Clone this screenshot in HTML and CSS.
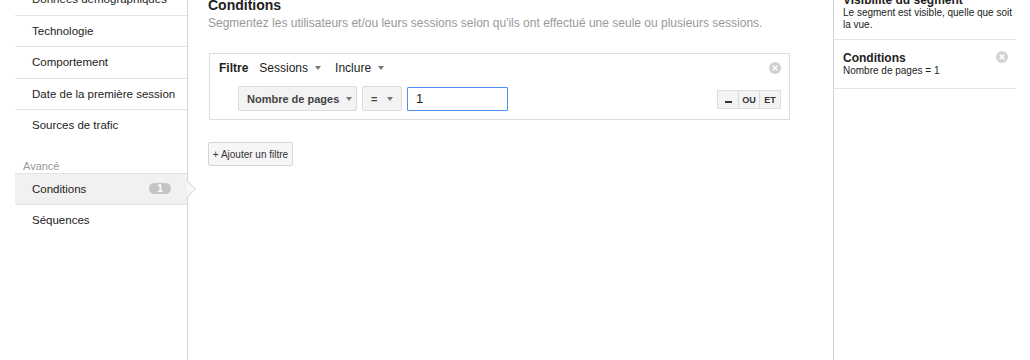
FILE: index.html
```html
<!DOCTYPE html>
<html lang="fr">

<head>
  <meta charset="UTF-8">
  <title>Segment - Conditions</title>
  <link rel="stylesheet" href="styles.css">
</head>

<body>
  <div class="page">

    <!-- left menu -->
    <div class="sidebar">
      <ul class="navList">
        <li class="navItem">Données démographiques</li>
        <li class="navItem">Technologie</li>
        <li class="navItem">Comportement</li>
        <li class="navItem">Date de la première session</li>
        <li class="navItem last">Sources de trafic</li>
      </ul>
      <div class="navHeader">Avancé</div>
      <ul class="navList">
        <li class="navItem active">Conditions <span class="badge">1</span></li>
        <li class="navItem last">Séquences</li>
      </ul>
    </div>

    <!-- editor -->
    <div class="main">
      <h1 class="title">Conditions</h1>
      <p class="subtitle">Segmentez les utilisateurs et/ou leurs sessions selon qu'ils ont effectué une seule ou plusieurs sessions.</p>

      <div class="filterBox">
        <div class="filterHead">
          <span class="filterLabel">Filtre</span>
          <span class="dropText">Sessions <i class="caret"></i></span>
          <span class="dropText">Inclure <i class="caret"></i></span>
          <svg class="closeIcon" width="12" height="12" viewBox="0 0 12 12">
            <circle cx="6" cy="6" r="6" fill="#cfcfcf" />
            <path d="M3.8 3.8 L8.2 8.2 M8.2 3.8 L3.8 8.2" stroke="#fff" stroke-width="1.6" />
          </svg>
        </div>
        <div class="filterRow">
          <span class="selectBtn wide">Nombre de pages <i class="caret"></i></span>
          <span class="selectBtn narrow">= <i class="caret"></i></span>
          <input class="valueInput" type="text" value="1">
          <div class="btnGroup">
            <span class="groupBtn"><i class="dash"></i></span>
            <span class="groupBtn">OU</span>
            <span class="groupBtn">ET</span>
          </div>
        </div>
      </div>

      <button class="addBtn">+ Ajouter un filtre</button>
    </div>

    <!-- summary -->
    <div class="aside">
      <div class="summary first">
        <div class="summaryTitle">Visibilité du segment</div>
        <div class="summaryText">Le segment est visible, quelle que soit<br>la vue.</div>
      </div>
      <div class="summary">
        <div class="summaryHead">
          <span class="summaryTitle">Conditions</span>
          <svg class="closeIcon" width="12" height="12" viewBox="0 0 12 12">
            <circle cx="6" cy="6" r="6" fill="#d4d4d4" />
            <path d="M3.8 3.8 L8.2 8.2 M8.2 3.8 L3.8 8.2" stroke="#fff" stroke-width="1.6" />
          </svg>
        </div>
        <div class="summaryText">Nombre de pages = 1</div>
      </div>
    </div>

  </div>
</body>

</html>
```

FILE: styles.css
```css
body {
  margin: 0;
  font-family: "Liberation Sans", Arial, sans-serif;
  color: #222;
  background: #fff;
}

.page {
  display: flex;
  height: 360px;
  overflow: hidden;
}

/* left menu */
.sidebar {
  width: 172px;
  padding-left: 15px;
  border-right: 1px solid #d4d4d4;
  flex-shrink: 0;
}

.navList {
  list-style: none;
  margin: 0;
  padding: 0;
}

.navList:first-child {
  margin-top: -16px;
}

.navItem {
  position: relative;
  height: 30.5px;
  line-height: 30.5px;
  padding-left: 17px;
  padding-right: 17px;
  font-size: 11.5px;
  color: #222;
  white-space: nowrap;
  border-bottom: 1px solid #e3e3e3;
}

.navItem.last {
  border-bottom: none;
}

.navHeader {
  padding: 18px 0 0 8px;
  height: 14px;
  line-height: 14px;
  font-size: 11px;
  color: #999;
  border-bottom: 1px solid #e3e3e3;
}

.navItem.active {
  background: #f1f1f1;
  display: flex;
  justify-content: space-between;
  align-items: center;
}

.navItem.active::before,
.navItem.active::after {
  content: "";
  position: absolute;
  top: 7px;
  width: 0;
  height: 0;
  border-top: 8px solid transparent;
  border-bottom: 8px solid transparent;
}

.navItem.active::before {
  right: -9px;
  border-left: 8px solid #cfcfcf;
}

.navItem.active::after {
  right: -8px;
  border-left: 8px solid #f7f7f7;
}

.badge {
  display: inline-block;
  width: 22px;
  height: 11px;
  line-height: 11px;
  border-radius: 6px;
  background: #c4c4c4;
  color: #fff;
  font-size: 10px;
  font-weight: bold;
  text-align: center;
  margin-right: -1px;
}

/* editor */
.main {
  flex: 1;
  padding-left: 20px;
  border-right: 1px solid #d4d4d4;
}

.title {
  margin: -4px 0 0 0;
  font-size: 14px;
  line-height: 18px;
  font-weight: bold;
  color: #222;
}

.subtitle {
  margin: 1px 0 0 0;
  font-size: 12px;
  line-height: 16px;
  color: #999;
}

.filterBox {
  margin: 22px 0 0 1px;
  width: 562px;
  padding: 6px 8px 8px 9px;
  border: 1px solid #dcdcdc;
}

.filterHead {
  display: flex;
  align-items: center;
  height: 16px;
  font-size: 12px;
}

.filterLabel {
  font-weight: bold;
  margin-right: 11px;
}

.dropText {
  color: #222;
  margin-right: 14px;
  display: flex;
  align-items: center;
}

.caret {
  display: inline-block;
  width: 0;
  height: 0;
  margin-left: 7px;
  border-left: 3px solid transparent;
  border-right: 3px solid transparent;
  border-top: 4px solid #777;
}

.closeIcon {
  margin-left: auto;
  display: block;
}

.filterRow {
  display: flex;
  align-items: center;
  gap: 5px;
  margin-top: 10px;
  padding-left: 19px;
}

.selectBtn {
  display: flex;
  align-items: center;
  justify-content: space-between;
  box-sizing: border-box;
  height: 25px;
  padding: 0 8px;
  background: #f3f3f3;
  border: 1px solid #dcdcdc;
  border-radius: 2px;
  font-size: 11px;
  font-weight: bold;
  color: #444;
  white-space: nowrap;
}

.selectBtn.wide {
  width: 119px;
}

.selectBtn.narrow {
  width: 40px;
}

.valueInput {
  box-sizing: border-box;
  width: 101px;
  height: 24px;
  padding: 0 8px;
  border: 1px solid #4d90fe;
  border-radius: 1px;
  font-family: "Liberation Sans", Arial, sans-serif;
  font-size: 13px;
  color: #222;
  outline: none;
}

.btnGroup {
  display: flex;
  margin-left: auto;
  margin-top: 2px;
}

.groupBtn {
  box-sizing: border-box;
  display: flex;
  align-items: center;
  justify-content: center;
  width: 22px;
  height: 19px;
  background: #f3f3f3;
  border: 1px solid #dcdcdc;
  margin-left: -1px;
  font-size: 9px;
  font-weight: bold;
  color: #333;
}

.dash {
  display: block;
  width: 7px;
  height: 2px;
  margin-top: 4px;
  background: #333;
}

.addBtn {
  margin-top: 22px;
  width: 85px;
  height: 24px;
  padding: 0;
  background: #f6f6f6;
  border: 1px solid #d6d6d6;
  border-radius: 2px;
  font-family: "Liberation Sans", Arial, sans-serif;
  font-size: 10px;
  color: #333;
  white-space: nowrap;
}

/* summary */
.aside {
  width: 182px;
  flex-shrink: 0;
  margin-right: 14px;
}

.summary {
  padding: 11px 8px 11px 9px;
  border-bottom: 1px solid #e3e3e3;
}

.summary.first {
  margin-top: -7px;
  padding-top: 0;
  padding-bottom: 8px;
}

.summaryHead {
  display: flex;
  align-items: flex-start;
}

.summaryTitle {
  font-size: 12px;
  line-height: 14px;
  font-weight: bold;
}

.summaryText {
  font-size: 10px;
  line-height: 12px;
  color: #222;
  white-space: nowrap;
}
```
